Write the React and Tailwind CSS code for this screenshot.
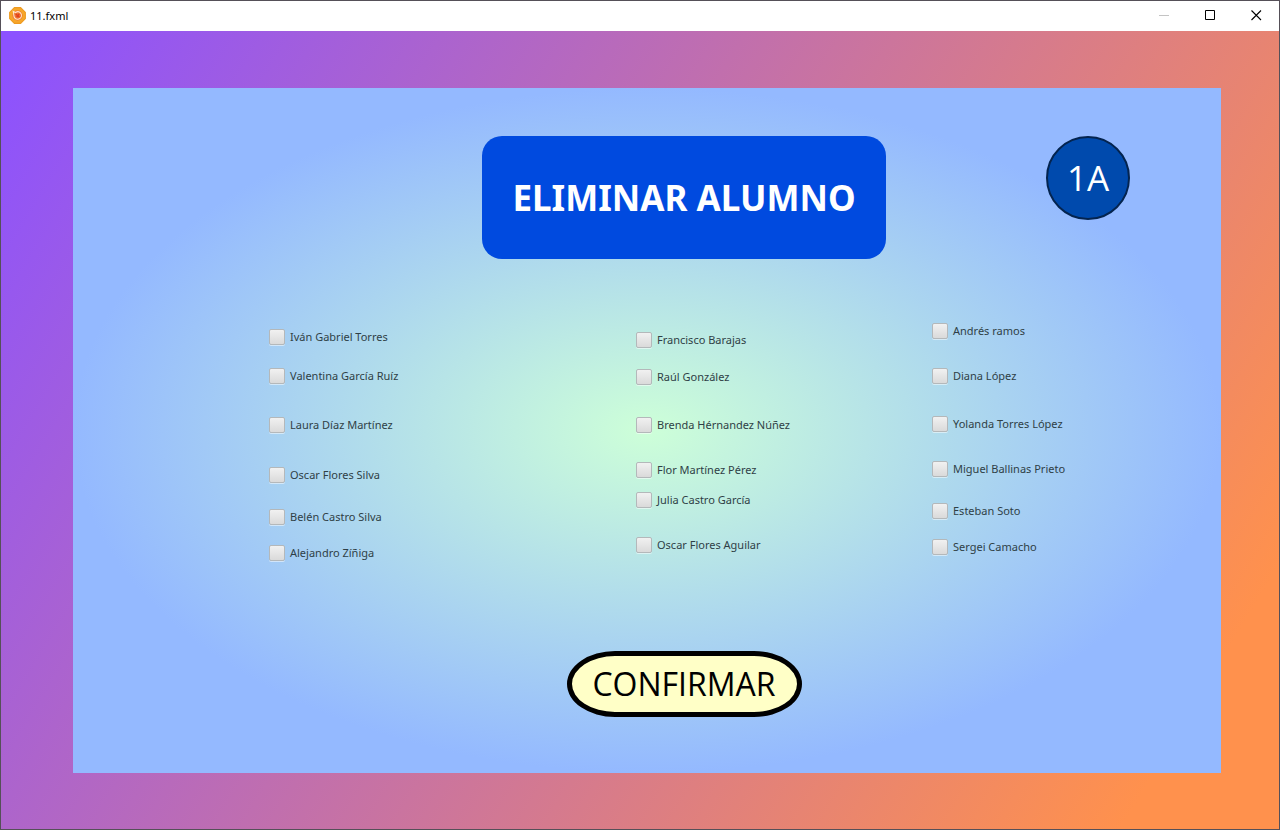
import React from "react";

const columns = [
  {
    className: "pt-[14px]",
    names: [
      ["Iván Gabriel Torres", "mb-[19px]"],
      ["Valentina García Ruíz", "mb-[29px]"],
      ["Laura Díaz Martínez", "mb-[30px]"],
      ["Oscar Flores Silva", "mb-[22px]"],
      ["Belén Castro Silva", "mb-[16px]"],
      ["Alejandro Zíñiga", ""],
    ],
  },
  {
    className: "pt-[17px]",
    names: [
      ["Francisco Barajas", "mb-[17px]"],
      ["Raúl González", "mb-[28px]"],
      ["Brenda Hérnandez Núñez", "mb-[25px]"],
      ["Flor Martínez Pérez", "mb-[10px]"],
      ["Julia Castro García", "mb-[25px]"],
      ["Oscar Flores Aguilar", ""],
    ],
  },
  {
    className: "pt-[8px]",
    names: [
      ["Andrés ramos", "mb-[25px]"],
      ["Diana López", "mb-[28px]"],
      ["Yolanda Torres López", "mb-[25px]"],
      ["Miguel Ballinas Prieto", "mb-[22px]"],
      ["Esteban Soto", "mb-[16px]"],
      ["Sergei Camacho", ""],
    ],
  },
];

function AppIcon() {
  return (
    <svg className="size-[17px]" viewBox="0 0 16 16" aria-hidden="true">
      <path d="M5 .6h6L15.4 5v6L11 15.4H5L.6 11V5z" fill="#f6a72b" stroke="#ee9a20" strokeWidth="1" strokeLinejoin="round" />
      <circle cx="8" cy="8" r="4.800" fill="#ee7434" />
      <path d="M4 4.200l2.200 1a3.600 3.600 0 0 1 4.800.6 3.500 3.500 0 0 1-.6 4.900 3.600 3.600 0 0 1-5.200-.7C4.200 8.600 4.700 6.400 4 4.200z" fill="none" stroke="#ffe9cf" strokeWidth="1" />
      <path d="M6.400 6.600l3.400 3M9.600 6.600L7.200 9.400" stroke="#e2401f" strokeWidth="1.400" />
    </svg>
  );
}

function TitleBar() {
  const button = "flex h-full w-[46px] items-center justify-center";
  return (
    <header className="flex h-[30px] items-center bg-white pb-px pl-2 text-black">
      <AppIcon />
      <span className="ml-1 flex-1 text-[11px] leading-4">11.fxml</span>
      <button type="button" aria-label="Minimizar" disabled className={button}>
        <svg className="size-[11px]" viewBox="0 0 11 11"><path d="M0 5.500h10" stroke="#c4c4c4" /></svg>
      </button>
      <button type="button" aria-label="Maximizar" className={button}>
        <svg className="size-[11px]" viewBox="0 0 11 11"><path d="M.5.5h9v9h-9z" fill="none" stroke="#000" /></svg>
      </button>
      <button type="button" aria-label="Cerrar" className={button}>
        <svg className="size-[11px]" viewBox="0 0 11 11"><path d="M.5.5l9.500 9.500M10 .5L.5 10" stroke="#000" strokeWidth="1.100" /></svg>
      </button>
    </header>
  );
}

function Student({ name, className }) {
  return (
    <label className={"flex h-5 items-center gap-[5px] whitespace-nowrap text-[11px] leading-5 text-[#2f3f46] " + className}>
      <input
        type="checkbox"
        className="size-4 shrink-0 appearance-none rounded-[2px] border border-[#b4b8ba] bg-linear-to-b from-[#f1f1f1] to-[#dadada] shadow-[0_1px_0_rgba(255,255,255,0.5)] checked:from-[#5b8def] checked:to-[#2f66d0]"
      />
      <span>{name}</span>
    </label>
  );
}

export default function App() {
  return (
    <div className="flex min-h-screen flex-col border border-[#555058] font-['Noto_Sans','Open_Sans',sans-serif]">
      <TitleBar />
      <div className="flex flex-1 flex-col bg-[linear-gradient(121deg,#8c52ff_1%,#ff914d_91%)] pt-[57px] pr-[58px] pb-14 pl-[72px]">
        <main className="flex flex-1 flex-col bg-[radial-gradient(closest-side,#cdffd8,#94b9ff)] pt-12 pb-14">
          <div className="grid grid-cols-[409fr_404px_335fr] items-start">
            <h1 className="col-start-2 flex h-[123px] items-center justify-center rounded-[20px] bg-[#004adf] text-[35px] leading-10 font-bold text-white">
              ELIMINAR ALUMNO
            </h1>
            <div className="mr-[91px] flex size-[84px] items-center justify-center justify-self-end rounded-full border-2 border-[#04244f] bg-[#004aad] font-['Open_Sans','Noto_Sans',sans-serif] text-[35px] leading-10 text-white">
              1A
            </div>
          </div>
          <div className="mt-[54px] grid flex-1 grid-cols-[367fr_296fr_289fr] pl-[196px]">
            {columns.map((column, i) => (
              <div key={i} className={column.className}>
                {column.names.map(([name, gap]) => (
                  <Student key={name} name={name} className={gap} />
                ))}
              </div>
            ))}
          </div>
          <div className="grid grid-cols-[409fr_404px_335fr]">
            <button
              type="button"
              className="col-start-2 flex h-[66px] w-[235px] items-center justify-center justify-self-center rounded-[48px/33px] border-[5px] border-black bg-[#ffffc7] font-['Open_Sans','Noto_Sans',sans-serif] text-[32px] leading-10 text-black"
            >
              CONFIRMAR
            </button>
          </div>
        </main>
      </div>
    </div>
  );
}
